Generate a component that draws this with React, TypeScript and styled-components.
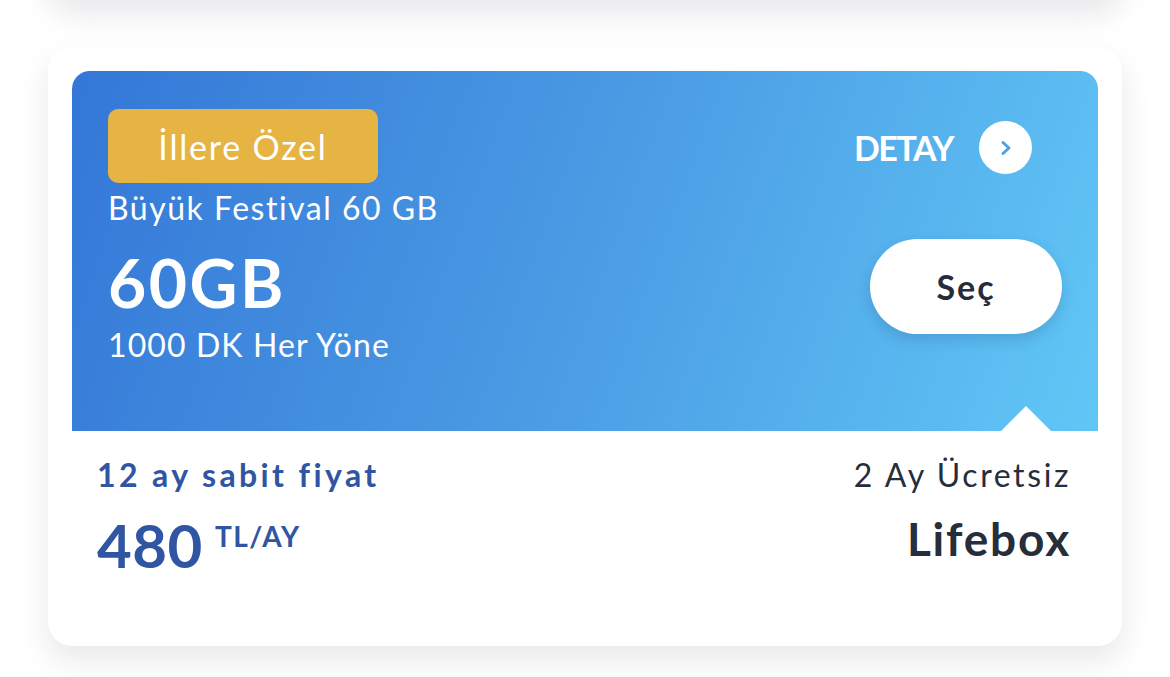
import React from "react";
import styled, { createGlobalStyle } from "styled-components";

const GlobalStyle = createGlobalStyle`
  html, body { margin: 0; padding: 0; background: #ffffff; }
  body { font-family: "Lato", "Noto Sans", sans-serif; -webkit-font-smoothing: antialiased; }
  * { box-sizing: border-box; }
`;

const Page = styled.div`
  width: 1170px;
  height: 677px;
  overflow: hidden;
  padding: 0 48px;
  display: flex;
  flex-direction: column;
  gap: 47px;
`;

const PrevCard = styled.div`
  flex: none;
  height: 300px;
  margin-top: -300px;
  background: #fff;
  border-radius: 24px;
  box-shadow: 0 14px 30px rgba(20, 25, 45, 0.1);
`;

const Card = styled.div`
  flex: none;
  height: 599px;
  background: #fff;
  border-radius: 24px;
  box-shadow: 0 14px 30px rgba(20, 25, 45, 0.1);
  padding: 24px 24px 0;
  display: flex;
  flex-direction: column;
`;

const Hero = styled.div`
  position: relative;
  height: 360px;
  border-radius: 18px 18px 0 0;
  background: linear-gradient(110deg, #3477d7 0%, #4a9be4 50%, #61c7f6 100%);
  padding: 38px 36px 0;
  display: flex;
  justify-content: space-between;
  color: #fff;
`;

const LeftCol = styled.div`
  display: flex;
  flex-direction: column;
  align-items: flex-start;
`;

const Badge = styled.div`
  width: 270px;
  height: 74px;
  border-radius: 10px;
  background: #e5b443;
  display: flex;
  align-items: center;
  justify-content: center;
  font-size: 34px;
  letter-spacing: 1.8px;
  color: #fff;
`;

const Subtitle = styled.div`
  font-size: 32px;
  line-height: 36px;
  margin-top: 7px;
  letter-spacing: 1.5px;
`;

const Big = styled.div`
  font-size: 66px;
  font-weight: 700;
  line-height: 70px;
  margin-top: 22px;
  letter-spacing: 2.5px;
`;

const Minutes = styled.div`
  font-size: 32px;
  line-height: 36px;
  margin-top: 9px;
  letter-spacing: 1.1px;
`;

const RightCol = styled.div`
  display: flex;
  flex-direction: column;
  align-items: flex-end;
  padding-top: 12px;
`;

const DetailRow = styled.div`
  display: flex;
  align-items: center;
  gap: 26px;
  margin-right: 30px;
`;

const DetailText = styled.span`
  font-size: 34px;
  font-weight: 700;
  letter-spacing: -1.5px;
`;

const Circle = styled.div`
  width: 53px;
  height: 53px;
  border-radius: 50%;
  background: #fff;
  display: flex;
  align-items: center;
  justify-content: center;
`;

const SelectButton = styled.button`
  margin-top: 65px;
  width: 192px;
  height: 95px;
  border-radius: 48px;
  border: none;
  background: #fff;
  box-shadow: 0 6px 14px rgba(20, 50, 100, 0.18);
  font-family: inherit;
  font-size: 34px;
  font-weight: 700;
  color: #252c3a;
  letter-spacing: 2px;
`;

const Notch = styled.div`
  position: absolute;
  right: 47px;
  bottom: 0;
  width: 0;
  height: 0;
  border-left: 25px solid transparent;
  border-right: 25px solid transparent;
  border-bottom: 25px solid #fff;
`;

const Info = styled.div`
  display: flex;
  justify-content: space-between;
  padding: 24px 27px 0 25px;
`;

const InfoCol = styled.div<{ $align: "left" | "right" }>`
  display: flex;
  flex-direction: column;
  align-items: ${(p) => (p.$align === "left" ? "flex-start" : "flex-end")};
`;

const FixedLabel = styled.div`
  font-size: 32px;
  font-weight: 700;
  color: #3055a3;
  letter-spacing: 3.4px;
  line-height: 40px;
`;

const PriceRow = styled.div`
  display: flex;
  align-items: flex-start;
  gap: 12px;
  margin-top: 20px;
  color: #3055a3;
`;

const Price = styled.span`
  font-size: 60px;
  font-weight: 700;
  line-height: 60px;
  letter-spacing: 0.5px;
`;

const Unit = styled.span`
  font-size: 28px;
  font-weight: 700;
  line-height: 30px;
  margin-top: 6px;
  letter-spacing: 1.5px;
`;

const FreeLabel = styled.div`
  font-size: 32px;
  color: #262d3b;
  letter-spacing: 2.6px;
  line-height: 40px;
`;

const Brand = styled.div`
  font-size: 46px;
  font-weight: 700;
  color: #262d3b;
  line-height: 60px;
  margin-top: 14px;
  letter-spacing: 1.8px;
`;

export default function App() {
  return (
    <>
      <GlobalStyle />
      <Page>
        <PrevCard />
        <Card>
          <Hero>
            <LeftCol>
              <Badge>İllere Özel</Badge>
              <Subtitle>Büyük Festival 60 GB</Subtitle>
              <Big>60GB</Big>
              <Minutes>1000 DK Her Yöne</Minutes>
            </LeftCol>
            <RightCol>
              <DetailRow>
                <DetailText>DETAY</DetailText>
                <Circle>
                  <svg width="14" height="18" viewBox="0 0 14 18">
                    <polyline
                      points="4,3.5 10,9 4,14.5"
                      fill="none"
                      stroke="#4aa2e8"
                      strokeWidth="3"
                      strokeLinecap="round"
                      strokeLinejoin="round"
                    />
                  </svg>
                </Circle>
              </DetailRow>
              <SelectButton>Seç</SelectButton>
            </RightCol>
            <Notch />
          </Hero>
          <Info>
            <InfoCol $align="left">
              <FixedLabel>12 ay sabit fiyat</FixedLabel>
              <PriceRow>
                <Price>480</Price>
                <Unit>TL/AY</Unit>
              </PriceRow>
            </InfoCol>
            <InfoCol $align="right">
              <FreeLabel>2 Ay Ücretsiz</FreeLabel>
              <Brand>Lifebox</Brand>
            </InfoCol>
          </Info>
        </Card>
      </Page>
    </>
  );
}
